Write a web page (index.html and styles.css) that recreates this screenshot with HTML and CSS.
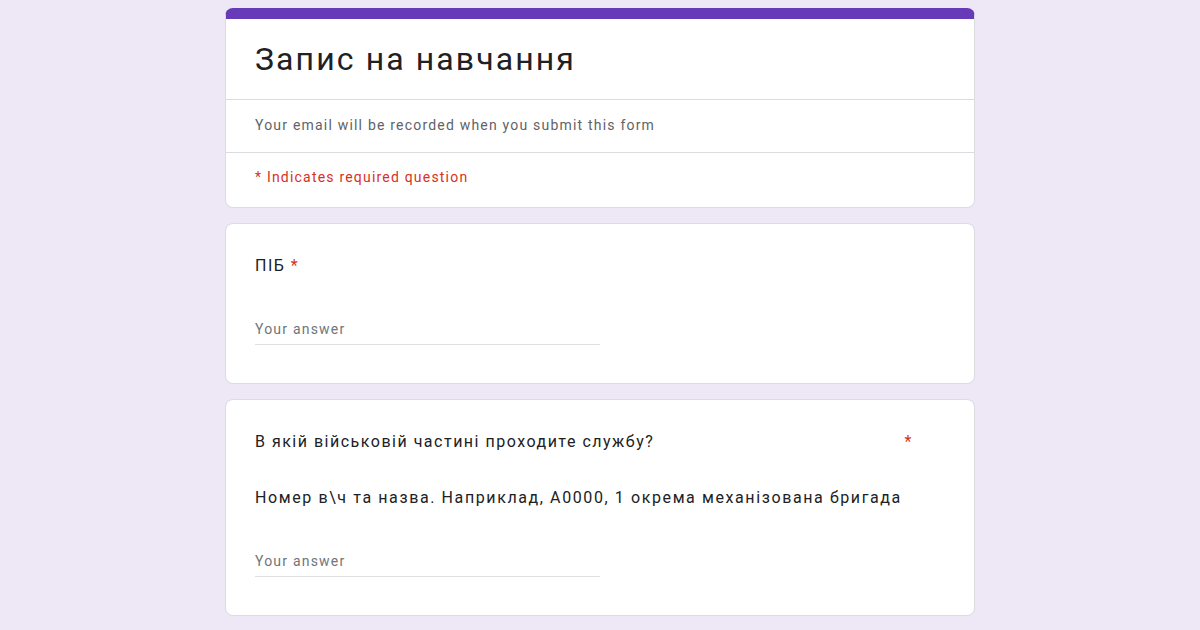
FILE: index.html
```html
<!DOCTYPE html>
<html lang="uk">
<head>
    <meta charset="UTF-8">
    <meta name="viewport" content="width=device-width, initial-scale=1.0">
    <title>Запис на навчання</title>
    <link rel="stylesheet" href="styles.css">
</head>
<body>
    <div class="form">
        <div class="card header">
            <div class="title">Запис на навчання</div>
            <div class="row email">Your email will be recorded when you submit this form</div>
            <div class="row required">* Indicates required question</div>
        </div>

        <div class="card question">
            <div class="q-title">ПІБ <span class="star">*</span></div>
            <div class="answer">Your answer</div>
        </div>

        <div class="card question">
            <div class="q-title wide">
                <span>В якій військовій частині проходите службу?</span>
                <span class="star">*</span>
            </div>
            <div class="q-desc">Номер в\ч та назва. Наприклад, А0000, 1 окрема механізована бригада</div>
            <div class="answer">Your answer</div>
        </div>
    </div>
</body>
</html>
```

FILE: styles.css
```css
body {
    margin: 0;
    background: #ede7f6;
    font-family: Roboto, "Noto Sans", sans-serif;
    color: #202124;
}
.form {
    width: 750px;
    margin: 8px auto 0;
    display: flex;
    flex-direction: column;
    gap: 15px;
}
.card {
    background: #fff;
    border: 1px solid #dadce0;
    border-radius: 8px;
}
.header {
    border-top: 11px solid #673ab7;
    border-radius: 8px;
}
.title {
    padding: 20px 29px 20px;
    font-size: 32px;
    line-height: 40px;
    letter-spacing: 2.1px;
    color: #202124;
}
.row {
    border-top: 1px solid #dadce0;
    padding: 0 29px;
    font-size: 14px;
    line-height: 20px;
    letter-spacing: 1.2px;
}
.email {
    padding-top: 15px;
    padding-bottom: 17px;
    color: #5f6368;
}
.required {
    padding-top: 14px;
    padding-bottom: 20px;
    color: #d93025;
}
.question {
    padding: 30px 29px 38px;
}
.q-title {
    font-size: 16px;
    line-height: 24px;
    letter-spacing: 1.5px;
}
.q-title.wide {
    width: 658px;
    display: flex;
    justify-content: space-between;
}
.star {
    color: #d93025;
}
.q-desc {
    margin-top: 32px;
    font-size: 16px;
    line-height: 24px;
    letter-spacing: 1.6px;
}
.answer {
    width: 345px;
    margin-top: 41px;
    padding-bottom: 5px;
    border-bottom: 1px solid #e0e0e0;
    font-size: 14px;
    line-height: 20px;
    letter-spacing: 1.2px;
    color: #70757a;
}
```
